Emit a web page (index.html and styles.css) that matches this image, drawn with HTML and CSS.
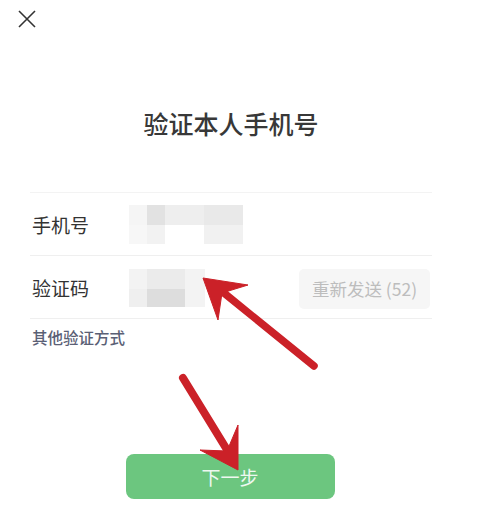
FILE: index.html
```html
<!DOCTYPE html>
<html lang="zh">
<head>
<meta charset="utf-8">
<link rel="stylesheet" href="styles.css">
</head>
<body>
<div class="page">
  <div class="topbar">
    <svg class="close" width="18" height="18" viewBox="0 0 18 18"><path d="M1 1L17 17M17 1L1 17" stroke="#333" stroke-width="1.6" fill="none"/></svg>
  </div>
  <h1 class="title">验证本人手机号</h1>
  <div class="form">
    <div class="row">
      <span class="label">手机号</span>
      <div class="mosaic m1">
        <i class="c a1"></i><i class="c a2"></i><i class="c a3"></i><i class="c a4"></i>
        <i class="c b1"></i><i class="c b2"></i><i class="c b3"></i><i class="c b4"></i>
      </div>
    </div>
    <div class="row">
      <span class="label">验证码</span>
      <div class="mosaic m2">
        <i class="c d1"></i><i class="c d2"></i><i class="c d3"></i>
        <i class="c e1"></i><i class="c e2"></i><i class="c e3"></i>
      </div>
      <span class="resend">重新发送 (52)</span>
    </div>
  </div>
  <div class="other">其他验证方式</div>
  <div class="actions">
    <button class="next">下一步</button>
  </div>
  <svg class="annot" width="500" height="532" viewBox="0 0 500 532">
    <g fill="#cb2128" stroke="#cb2128">
      <line x1="314" y1="366" x2="224" y2="293" stroke-width="7.5" stroke-linecap="round"/>
      <polygon points="203,278 248,285 222,293 218,320" stroke-width="1" stroke-linejoin="round"/>
      <line x1="183" y1="378" x2="229" y2="453" stroke-width="8" stroke-linecap="round"/>
      <polygon points="238,470 200,450 227,451 238,425" stroke-width="1" stroke-linejoin="round"/>
    </g>
  </svg>
</div>
</body>
</html>
```
FILE: styles.css
```css
html, body {
  margin: 0;
  padding: 0;
  background: #fff;
}
body {
  font-family: "Noto Sans CJK SC", "Noto Sans", sans-serif;
  color: #333;
}
.page {
  position: relative;
  width: 500px;
  height: 532px;
  overflow: hidden;
}
.topbar {
  height: 28px;
  padding: 10px 0 0 18px;
  box-sizing: border-box;
}
.close {
  display: block;
}
.title {
  margin: 78px 0 0 0;
  width: 462px;
  text-align: center;
  font-size: 25px;
  line-height: 34px;
  font-weight: 500;
  color: #383838;
  letter-spacing: 0;
}
.form {
  margin: 52px 0 0 30px;
  width: 402px;
  border-top: 1px solid #f3f3f3;
}
.row {
  height: 62px;
  display: flex;
  align-items: center;
  border-bottom: 1px solid #efefef;
}
.label {
  width: 97px;
  padding-left: 2px;
  font-size: 19px;
  color: #333;
}
.mosaic {
  display: grid;
}
.m1 {
  grid-template-columns: 18px 18px 39px 39px;
  grid-template-rows: 20px 19px;
  margin-top: 1px;
}
.m2 {
  grid-template-columns: 18px 38px 20px;
  grid-template-rows: 20px 18px;
  margin-top: 2px;
}
.c { display: block; }
.a1 { background: #f5f5f5; }
.a2 { background: #e2e2e2; }
.a3 { background: #eeeeee; }
.a4 { background: #e9e9e9; }
.b1 { background: #f7f7f7; }
.b2 { background: #f2f2f2; }
.b3 { background: #ffffff; }
.b4 { background: #f1f1f1; }
.d1 { background: #f3f3f3; }
.d2 { background: #ebebeb; }
.d3 { background: #f3f3f3; }
.e1 { background: #efefef; }
.e2 { background: #dddddd; }
.e3 { background: #f3f3f3; }
.resend {
  margin-left: auto;
  margin-right: 2px;
  width: 131px;
  height: 40px;
  line-height: 40px;
  text-align: center;
  background: #f6f6f6;
  border-radius: 5px;
  color: #bdbdbd;
  font-size: 17.5px;
  margin-top: 3px;
  white-space: nowrap;
}
.other {
  margin: 7px 0 0 32px;
  font-size: 15.5px;
  line-height: 22px;
  font-weight: 500;
  color: #5a6075;
}
.actions {
  width: 462px;
  display: flex;
  justify-content: center;
  margin-top: 106px;
}
.next {
  width: 209px;
  height: 45px;
  margin-left: -2px;
  border: none;
  border-radius: 8px;
  background: #6cc67f;
  color: #eef8f0;
  font-family: "Noto Sans CJK SC", sans-serif;
  font-size: 19px;
  padding: 0;
}
.annot {
  position: absolute;
  left: 0;
  top: 0;
  pointer-events: none;
}
```
